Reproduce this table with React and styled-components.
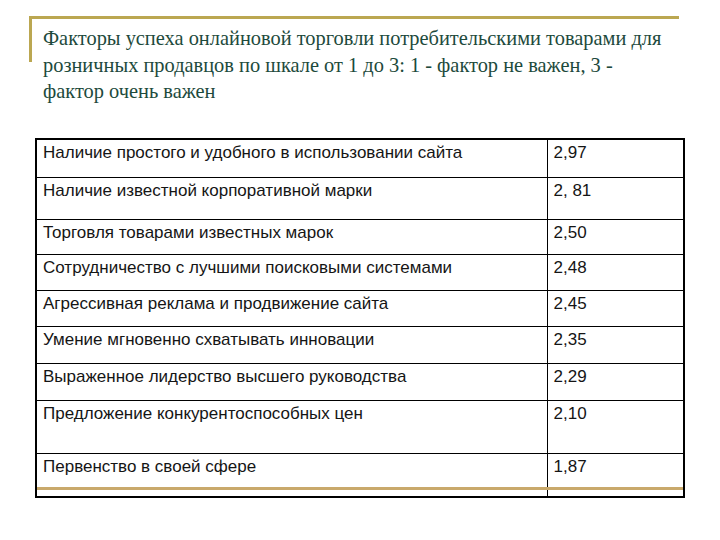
import React from 'react'
import styled, { createGlobalStyle } from 'styled-components'

const GlobalStyle = createGlobalStyle`
  html, body {
    margin: 0;
    padding: 0;
    background: #ffffff;
  }
`

const rows = [
  { name: 'Наличие простого и удобного в использовании сайта', value: '2,97', h: 39 },
  { name: 'Наличие известной корпоративной марки', value: '2, 81', h: 42 },
  { name: 'Торговля товарами известных марок', value: '2,50', h: 35 },
  { name: 'Сотрудничество с лучшими поисковыми системами', value: '2,48', h: 36 },
  { name: 'Агрессивная реклама и продвижение сайта', value: '2,45', h: 36 },
  { name: 'Умение мгновенно схватывать инновации', value: '2,35', h: 37 },
  { name: 'Выраженное лидерство высшего руководства', value: '2,29', h: 37 },
  { name: 'Предложение конкурентоспособных цен', value: '2,10', h: 53 },
  { name: 'Первенство в своей сфере', value: '1,87', h: 43 },
]

const App = () => {
  return (
    <Slide>
      <GlobalStyle />
      <Header>
        <Title>
          Факторы успеха онлайновой торговли потребительскими товарами для
          <br />
          розничных продавцов по шкале от 1 до 3: 1 - фактор не важен, 3 -
          <br />
          фактор очень важен
        </Title>
      </Header>
      <TableWrap>
        <Table>
          <tbody>
            {rows.map((r) => (
              <tr key={r.name}>
                <Cell $h={r.h}>{r.name}</Cell>
                <Cell $h={r.h} $value>
                  {r.value}
                </Cell>
              </tr>
            ))}
          </tbody>
        </Table>
      </TableWrap>
    </Slide>
  )
}

const Slide = styled.div`
  width: 720px;
  height: 540px;
  padding-top: 16px;
  box-sizing: border-box;
  overflow: hidden;
`

const Header = styled.header`
  position: relative;
  margin-left: 29px;
  width: 650px;
  padding: 9px 0 0 14px;
  box-sizing: border-box;

  /* gold corner frame of the slide template */
  &::before {
    content: '';
    position: absolute;
    left: 0;
    top: 0;
    width: 100%;
    height: 46px;
    border-top: 3px solid #bba751;
    border-left: 3px solid #bba751;
    box-sizing: border-box;
  }
`

const Title = styled.h1`
  margin: 0;
  font-family: 'Liberation Serif', 'DejaVu Serif', serif;
  font-weight: normal;
  font-size: 20.4px;
  line-height: 26.5px;
  color: #1d4a3c;
  white-space: nowrap;
`

const TableWrap = styled.div`
  position: relative;
  margin: 33px 0 0 35px;
  width: 650px;

  /* tan rule of the slide template over the table bottom */
  &::after {
    content: '';
    position: absolute;
    left: 2px;
    right: 2px;
    bottom: 8px;
    height: 3px;
    background: #c9a96b;
  }
`

const Table = styled.table`
  width: 100%;
  border-collapse: collapse;
  border: 2px solid #000;
  font-family: 'Liberation Sans', Arial, sans-serif;
  font-size: 17px;
  color: #151515;
`

const Cell = styled.td`
  height: ${(p) => p.$h}px;
  width: ${(p) => (p.$value ? '137px' : 'auto')};
  padding: 3px 6px 0 6px;
  vertical-align: top;
  box-sizing: border-box;
  border: 1px solid #000;
  line-height: 19px;
`

export default App
